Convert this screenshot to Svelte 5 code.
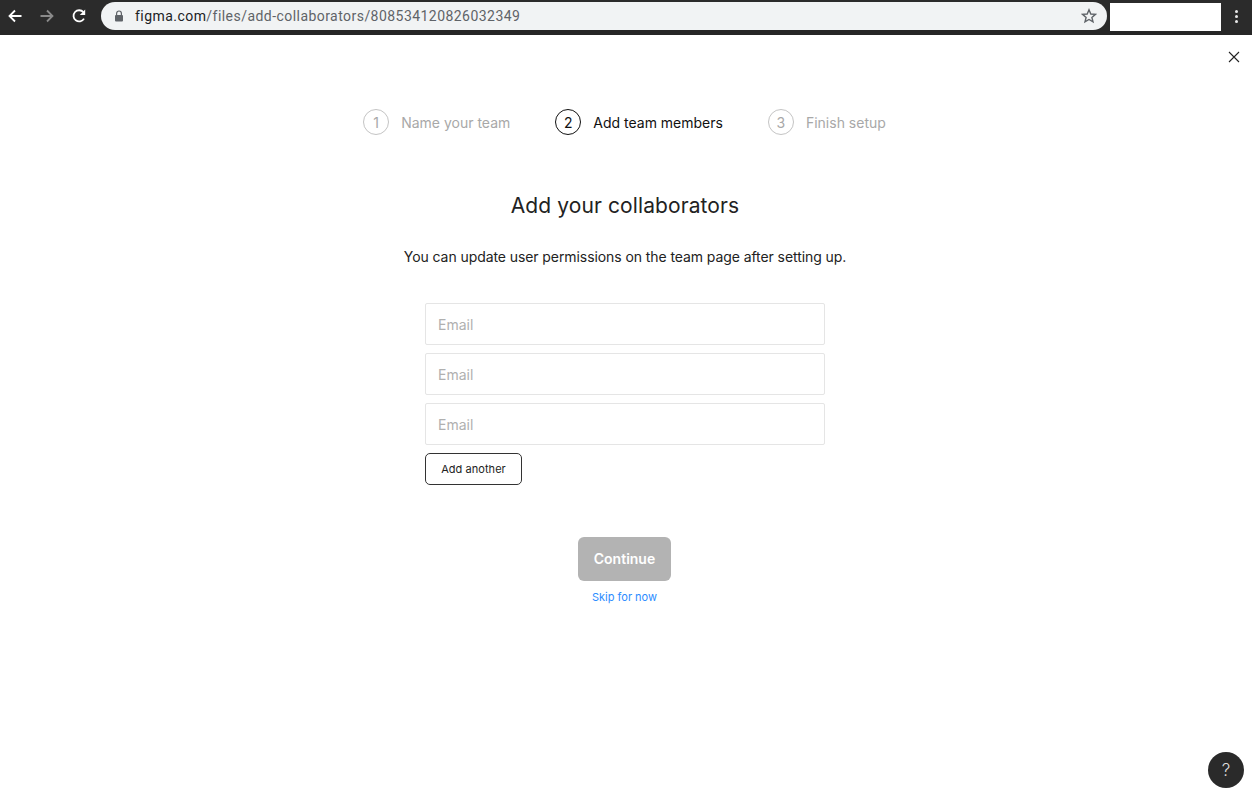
<script>
	const steps = [
		{ num: 1, label: 'Name your team' },
		{ num: 2, label: 'Add team members', active: true },
		{ num: 3, label: 'Finish setup' }
	];
	const emails = [0, 1, 2];
</script>

<div class="chrome">
	<div class="nav">
		<svg width="16" height="16" viewBox="0 0 16 16" class="back"><path d="M14.5 8H2.5M8 2.5L2.5 8L8 13.5" fill="none" stroke="#fff" stroke-width="1.8" /></svg>
		<svg width="16" height="16" viewBox="0 0 16 16" class="fwd"><path d="M1.5 8H13.5M8 2.5L13.5 8L8 13.5" fill="none" stroke="#8a8a8a" stroke-width="1.8" /></svg>
		<svg width="16" height="16" viewBox="0 0 16 16" class="reload"><path d="M13 10.6A5.6 5.6 0 1 1 12.4 4.2" fill="none" stroke="#fff" stroke-width="1.8" /><path d="M14.2 1.6V7H8.8Z" fill="#fff" /></svg>
	</div>
	<div class="omnibox">
		<svg width="10" height="12" viewBox="0 0 10 12" class="lock"><path d="M2.6 5V3.4a2.4 2.4 0 0 1 4.8 0V5" fill="none" stroke="#5f6368" stroke-width="1.2" /><rect x="1" y="5" width="8" height="6.4" rx="1" fill="#5f6368" /></svg>
		<span class="url"><b>figma.com</b>/files/add-collaborators/808534120826032349</span>
		<svg width="16" height="16" viewBox="0 0 16 16" class="star"><path d="M8 1.8L9.8 6L14.4 6.4L10.9 9.4L12 13.9L8 11.5L4 13.9L5.1 9.4L1.6 6.4L6.2 6Z" fill="none" stroke="#5f6368" stroke-width="1.4" /></svg>
	</div>
	<div class="profile"></div>
	<div class="menu"><i></i><i></i><i></i></div>
</div>

<main class="page">
	<div class="close-row">
		<svg width="12" height="12" viewBox="0 0 12 12"><path d="M1 1L11 11M11 1L1 11" fill="none" stroke="#222" stroke-width="1.1" /></svg>
	</div>

	<ol class="steps">
		{#each steps as step}
			<li class="step" class:active={step.active}>
				<span class="num">{step.num}</span>
				<span>{step.label}</span>
			</li>
		{/each}
	</ol>

	<h1>Add your collaborators</h1>
	<p class="sub">You can update user permissions on the team page after setting up.</p>

	<form class="form">
		{#each emails as i (i)}
			<input type="text" placeholder="Email" />
		{/each}
		<button type="button" class="add">Add another</button>
	</form>

	<button type="button" class="continue">Continue</button>
	<span class="skip">Skip for now</span>
</main>

<div class="help">?</div>

<style>
	:global(body) {
		margin: 0;
		background: #fff;
		font-family: Inter, "Liberation Sans", sans-serif;
		overflow: hidden;
	}
	.chrome {
		height: 35px;
		box-sizing: border-box;
		background: #2b2b2b;
		border-bottom: 5px solid #262626;
		display: flex;
		align-items: flex-start;
		padding-top: 1px;
	}
	.nav {
		width: 101px;
		height: 29px;
		flex-shrink: 0;
		display: flex;
		align-items: center;
		padding-left: 7px;
		box-sizing: border-box;
		gap: 16px;
	}
	.omnibox {
		width: 1006px;
		height: 28px;
		margin-top: 1px;
		flex-shrink: 0;
		background: #f1f3f4;
		border-radius: 14px;
		display: flex;
		align-items: center;
		padding: 0 10px 0 13px;
		box-sizing: border-box;
	}
	.lock {
		margin-right: 11px;
	}
	.url {
		flex: 1;
		font: 14px/1 Roboto, "Liberation Sans", sans-serif;
		letter-spacing: 0.45px;
		color: #5f6368;
	}
	.url b {
		font-weight: 400;
		color: #202124;
	}
	.profile {
		width: 111px;
		height: 28px;
		margin: 2px 0 0 3px;
		flex-shrink: 0;
		background: #fff;
	}
	.menu {
		flex: 1;
		display: flex;
		flex-direction: column;
		align-items: center;
		gap: 2px;
		padding-top: 9px;
	}
	.menu i {
		width: 3px;
		height: 3px;
		border-radius: 50%;
		background: #e8e8e8;
	}
	.page {
		display: flex;
		flex-direction: column;
		align-items: center;
		padding-right: 2px;
	}
	.close-row {
		align-self: stretch;
		display: flex;
		justify-content: flex-end;
		padding: 16px 10px 0 0;
		height: 12px;
	}
	.steps {
		list-style: none;
		margin: 46px 1px 0 0;
		padding: 0;
		display: flex;
		gap: 45px;
		height: 26px;
	}
	.step {
		display: flex;
		align-items: center;
		gap: 12px;
		font-size: 14px;
		color: #a8a8a8;
	}
	.step.active {
		color: #111;
	}
	.num {
		width: 26px;
		height: 26px;
		box-sizing: border-box;
		border: 1px solid #c4c4c4;
		border-radius: 50%;
		display: flex;
		align-items: center;
		justify-content: center;
	}
	.active .num {
		border-color: #111;
	}
	h1 {
		margin: 56px 0 0;
		font-size: 21px;
		line-height: 30px;
		font-weight: 400;
		color: #222;
		letter-spacing: 0.1px;
	}
	.sub {
		margin: 26px 0 0;
		font-size: 14px;
		line-height: 20px;
		letter-spacing: -0.08px;
		color: #222;
	}
	.form {
		width: 400px;
		margin-top: 36px;
		display: flex;
		flex-direction: column;
		align-items: flex-start;
		gap: 8px;
	}
	input {
		width: 100%;
		height: 42px;
		box-sizing: border-box;
		border: 1px solid #e5e5e5;
		border-radius: 2px;
		padding: 0 12px;
		font: 14px Inter, "Liberation Sans", sans-serif;
		outline: none;
	}
	input::placeholder {
		color: #b0b0b0;
		opacity: 1;
	}
	.add {
		width: 97px;
		height: 32px;
		background: #fff;
		border: 1px solid #333;
		border-radius: 5px;
		font: 11px Inter, "Liberation Sans", sans-serif;
		letter-spacing: 0.05px;
		color: #222;
		padding: 0;
	}
	.continue {
		width: 93px;
		height: 44px;
		margin: 52px 1px 0 0;
		background: #b3b3b3;
		border: none;
		border-radius: 6px;
		color: #fff;
		font: 600 14px Inter, "Liberation Sans", sans-serif;
		padding: 0 0 2px;
	}
	.skip {
		margin: 9px 1px 0 0;
		font-size: 11px;
		line-height: 14px;
		color: #2d8cff;
	}
	.help {
		position: fixed;
		right: 8px;
		bottom: 10px;
		width: 36px;
		height: 36px;
		border-radius: 50%;
		background: #2a2a2a;
		color: #ddd;
		font-size: 17px;
		font-weight: 300;
		display: flex;
		align-items: center;
		justify-content: center;
	}
</style>
